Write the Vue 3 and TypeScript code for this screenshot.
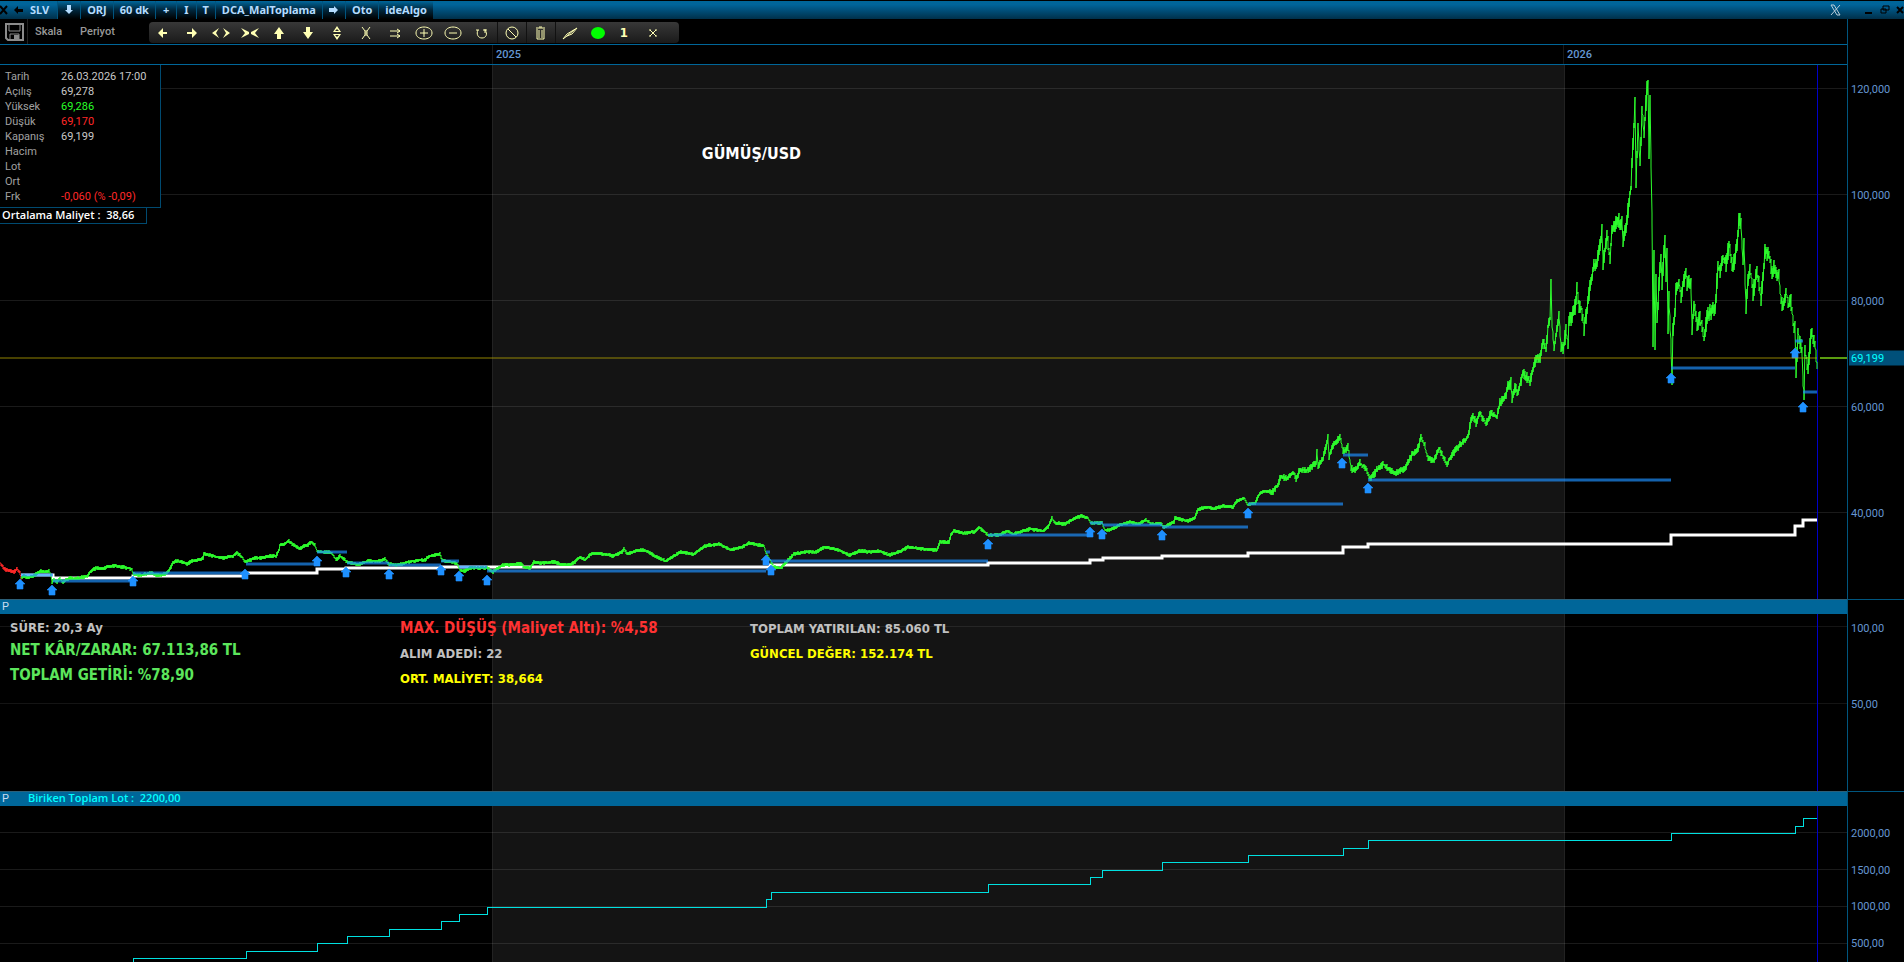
<script setup lang="ts">
type Point = [number, number]

const WIDTH = 1847
const MAIN_TOP = 65
const MAIN_H = 534
const MID_TOP = 599
const MID_H = 192
const LOT_TOP = 791
const LOT_H = 171

const anchors: Point[] = [
  [21, 578], [24, 576], [28, 578], [31, 577], [35, 575], [38, 573], [41, 571], [45, 572], [49, 571], [51, 575],
  [52, 582], [54, 580], [57, 582], [60, 579], [63, 582], [66, 580], [70, 578], [76, 579], [82, 577], [87, 576],
  [91, 571], [96, 568], [102, 569], [107, 567], [113, 566], [117, 566], [122, 567], [127, 568], [132, 569],
  [133, 574], [138, 575], [142, 575], [147, 574], [151, 573], [156, 575], [162, 575], [167, 573], [170, 569],
  [173, 563], [176, 561], [182, 562], [187, 564], [192, 561], [200, 560], [203, 558], [204, 554], [210, 555],
  [216, 557], [222, 558], [228, 557], [233, 556], [237, 553], [242, 557], [245, 562], [250, 560], [255, 558],
  [260, 558], [266, 557], [270, 556], [276, 556], [279, 550], [280, 545], [284, 544], [289, 541], [292, 544],
  [295, 546], [300, 549], [304, 546], [308, 545], [311, 542], [315, 545], [317, 551], [322, 552], [327, 552],
  [332, 553], [336, 560], [340, 556], [344, 559], [347, 562], [352, 563], [358, 565], [363, 563], [368, 561],
  [374, 561], [380, 561], [385, 559], [389, 564], [396, 565], [402, 564], [408, 562], [413, 561], [420, 560],
  [425, 560], [430, 556], [435, 555], [440, 554], [442, 560], [446, 561], [452, 562], [457, 564], [460, 570],
  [465, 571], [470, 568], [475, 568], [480, 568], [487, 568], [493, 572], [497, 569], [503, 565], [521, 564],
  [524, 567], [530, 568], [534, 562], [542, 563], [555, 562], [560, 564], [567, 565], [574, 563], [580, 557],
  [585, 560], [592, 553], [603, 554], [613, 556], [622, 552], [624, 549], [627, 554], [635, 551], [644, 550],
  [655, 556], [666, 561], [680, 552], [694, 554], [705, 546], [719, 544], [731, 550], [742, 547], [749, 543],
  [764, 546], [766, 553], [770, 560], [774, 567], [781, 568], [787, 561], [794, 554], [805, 552], [817, 552],
  [824, 547], [839, 550], [849, 555], [860, 551], [871, 552], [880, 551], [889, 555], [899, 552], [908, 547],
  [924, 549], [937, 550], [940, 542], [949, 542], [951, 535], [954, 531], [964, 533], [975, 532], [979, 527],
  [988, 535], [1000, 535], [1007, 531], [1013, 534], [1030, 529], [1043, 531], [1048, 527], [1052, 518],
  [1055, 523], [1065, 524], [1075, 518], [1081, 516], [1088, 518], [1091, 523], [1102, 523], [1105, 530],
  [1110, 530], [1120, 525], [1130, 522], [1138, 524], [1146, 520], [1152, 524], [1160, 523], [1164, 527],
  [1174, 522], [1175, 518], [1188, 521], [1195, 518], [1198, 509], [1208, 507], [1213, 509], [1222, 506],
  [1233, 507], [1237, 501], [1244, 498], [1248, 505], [1255, 503], [1260, 493], [1265, 491], [1272, 492],
  [1278, 485], [1280, 477], [1287, 478], [1293, 472], [1296, 479], [1300, 470], [1308, 470], [1316, 463],
  [1317, 452], [1318, 467], [1323, 458], [1328, 438], [1329, 457], [1333, 446], [1340, 437], [1343, 452],
  [1348, 447], [1351, 468], [1355, 471], [1360, 463], [1366, 469], [1370, 480], [1377, 470], [1383, 464],
  [1394, 474], [1405, 468], [1412, 455], [1417, 451], [1421, 438], [1425, 446], [1427, 456], [1434, 461],
  [1439, 448], [1447, 464], [1453, 453], [1462, 443], [1468, 437], [1471, 420], [1473, 415], [1476, 423],
  [1480, 413], [1486, 424], [1491, 413], [1497, 417], [1500, 402], [1504, 400], [1508, 387], [1511, 383],
  [1512, 400], [1515, 387], [1518, 393], [1523, 373], [1530, 382], [1536, 357], [1540, 358], [1543, 342],
  [1546, 350], [1548, 327], [1550, 318], [1551, 282], [1552, 325], [1554, 350], [1559, 313], [1561, 350],
  [1563, 350], [1566, 332], [1568, 343], [1569, 322], [1575, 307], [1577, 290], [1579, 308], [1581, 307],
  [1584, 328], [1588, 303], [1591, 280], [1593, 270], [1597, 262], [1600, 242], [1602, 232], [1603, 264],
  [1607, 235], [1610, 260], [1612, 228], [1618, 221], [1622, 222], [1623, 243], [1627, 220], [1629, 200],
  [1631, 188], [1633, 145], [1635, 103], [1636, 181], [1638, 126], [1640, 164], [1642, 113], [1644, 134],
  [1647, 88], [1648, 80], [1649, 157], [1650, 97], [1652, 220], [1653, 338], [1654, 258], [1655, 343],
  [1656, 277], [1657, 322], [1659, 285], [1661, 257], [1662, 282], [1665, 240], [1666, 278], [1667, 249],
  [1668, 331], [1669, 298], [1671, 345], [1672, 381], [1673, 327], [1675, 311], [1676, 290], [1679, 282],
  [1681, 296], [1686, 272], [1687, 284], [1691, 284], [1692, 328], [1694, 306], [1697, 324], [1700, 318],
  [1704, 337], [1708, 313], [1715, 310], [1718, 267], [1720, 271], [1723, 258], [1726, 263], [1729, 246],
  [1733, 267], [1737, 247], [1739, 218], [1741, 223], [1743, 261], [1744, 244], [1746, 308], [1748, 280],
  [1750, 269], [1753, 292], [1757, 273], [1761, 297], [1763, 277], [1765, 252], [1769, 253], [1772, 272],
  [1775, 267], [1779, 278], [1781, 298], [1783, 309], [1786, 292], [1789, 305], [1791, 302], [1793, 323],
  [1795, 326], [1796, 374], [1798, 333], [1802, 353], [1803, 378], [1804, 398], [1805, 352], [1808, 370],
  [1811, 333], [1815, 345], [1817, 366],
]

const openingAnchors: Point[] = [
  [0, 563], [3, 567], [6, 570], [10, 571], [14, 572], [17, 569], [20, 573], [21, 578],
]

/** Expands the closing prices to bar ranges, one bar for each pixel column. */
function barPath(points: Point[]): string {
  let seed = 7
  const random = (): number => {
    seed = (seed * 16807) % 2147483647
    return seed / 2147483647
  }
  let d = `M${points[0][0]} ${points[0][1]}`
  for (let i = 1; i < points.length; i++) {
    const [x0, y0] = points[i - 1]
    const [x1, y1] = points[i]
    for (let x = x0 + 1; x <= x1; x++) {
      const y = y0 + ((y1 - y0) * (x - x0)) / (x1 - x0)
      const range = x < 1270 ? 1 : x < 1500 ? 3 : x < 1560 ? 5 : 8
      const high = Math.max(80, Math.round(y - range * random() - 1))
      const low = Math.round(y + range * random() + 1)
      d += `L${x} ${high}L${x} ${low}`
    }
  }
  return d
}

const pricePath = barPath(anchors)
const openingPath = barPath(openingAnchors)

const supports: [number, number, number][] = [
  [21, 53, 575], [53, 133, 581], [133, 246, 573], [246, 317, 564], [317, 347, 552], [347, 389, 563],
  [389, 441, 565], [441, 459, 561], [459, 487, 567], [487, 766, 571], [766, 770, 552], [771, 988, 561],
  [988, 1090, 535], [1090, 1103, 523], [1103, 1162, 525], [1162, 1248, 527], [1248, 1343, 504],
  [1343, 1368, 455], [1368, 1671, 480], [1671, 1795, 368], [1795, 1803, 341], [1803, 1817, 392],
]

const averageSteps: Point[] = [
  [21, 575], [53, 578], [133, 576], [246, 573], [317, 569], [346, 568], [441, 567], [770, 565], [988, 563],
  [1090, 560], [1103, 558], [1162, 556], [1248, 553], [1343, 547], [1368, 544], [1671, 535], [1795, 526],
  [1803, 520],
]

const buys: Point[] = [
  [20, 579], [52, 585], [133, 576], [245, 569], [317, 556], [346, 567], [389, 569], [441, 565], [459, 571],
  [487, 575], [766, 555], [771, 565], [988, 539], [1090, 527], [1102, 529], [1162, 530], [1248, 508],
  [1342, 458], [1368, 483], [1671, 373], [1795, 348], [1803, 402],
]

const lotXs = [
  133, 246, 317, 347, 389, 441, 459, 487, 766, 771, 988, 1090, 1102, 1162, 1248, 1343, 1368, 1671, 1795, 1803,
]
const lotSteps: Point[] = [
  [53, 965],
  ...lotXs.map((x, i): Point => [x, Math.round(980.3 - (i + 3) * 7.37)]),
]

function stepPath(steps: Point[]): string {
  return `M${steps[0][0]} ${steps[0][1]}` + steps.slice(1).map(([x, y]) => `H${x}V${y}`).join('') + 'H1817'
}

const averagePath = stepPath(averageSteps)
const lotPath = stepPath(lotSteps)

interface Tick { label: string; y: number }
const mainTicks: Tick[] = [
  { label: '120,000', y: 88 }, { label: '100,000', y: 194 }, { label: '80,000', y: 300 },
  { label: '60,000', y: 406 }, { label: '40,000', y: 512 },
]
const midTicks: Tick[] = [{ label: '100,00', y: 626 }, { label: '50,00', y: 703 }]
const lotTicks: Tick[] = [
  { label: '2000,00', y: 832 }, { label: '1500,00', y: 869 }, { label: '1000,00', y: 906 }, { label: '500,00', y: 943 },
]

const percent = (value: number, size: number): string => `${(value / size) * 100}%`

const quote = [
  { label: 'Tarih', value: '26.03.2026 17:00', tone: '' },
  { label: 'Açılış', value: '69,278', tone: '' },
  { label: 'Yüksek', value: '69,286', tone: 'up' },
  { label: 'Düşük', value: '69,170', tone: 'down' },
  { label: 'Kapanış', value: '69,199', tone: '' },
  { label: 'Hacim', value: '', tone: '' },
  { label: 'Lot', value: '', tone: '' },
  { label: 'Ort', value: '', tone: '' },
  { label: 'Frk', value: '-0,060 (% -0,09)', tone: 'down' },
]

const years = [{ label: '2025', x: 492 }, { label: '2026', x: 1563 }]

interface Tool { name: string; d?: string; fill?: boolean; sep?: boolean; text?: string; dot?: boolean; size?: string }
const tools: Tool[] = [
  { name: 'Sola', d: 'M6 11L11 6V10H15V12H11V16Z', fill: true },
  { name: 'Sağa', d: 'M16 11L11 6V10H6V12H11V16Z', fill: true },
  { name: 'Yatay genişlet', d: 'M9 6L2 11L9 16L6 11ZM13 6L20 11L13 16L16 11Z', fill: true },
  { name: 'Yatay daralt', d: 'M2 6L10 10V12L2 16L6 11ZM20 6L12 10V12L20 16L16 11Z', fill: true },
  { name: 'Yukarı', d: 'M11 5L16 12H13V17H9V12H6Z', fill: true },
  { name: 'Aşağı', d: 'M11 17L16 10H13V5H9V10H6Z', fill: true },
  { name: 'Dikey genişlet', d: 'M11 4L15 10H7ZM11 18L15 12H7ZM11 7L9 9H13ZM11 15L9 13H13Z', fill: true },
  { name: 'Dikey daralt', d: 'M7 5L10 9V13L7 17M15 5L12 9V13L15 17M11 8V14' },
  { name: 'Kaydır', d: 'M6 9H16M6 14H16M13 7L16 9L13 11M13 12L16 14L13 16' },
  { name: 'Yakınlaş', d: 'M11 5C15 5 19 7 19 11S15 17 11 17S3 15 3 11S7 5 11 5ZM7 11H15M11 7V15' },
  { name: 'Uzaklaş', d: 'M11 5C15 5 19 7 19 11S15 17 11 17S3 15 3 11S7 5 11 5ZM7 11H15' },
  { name: 'Yenile', d: 'M7 8C5 12 7 16 11 16S17 12 14 8M12 8H16M14 7V11M5 8H8' },
  { name: 'Engelle', d: 'M11 5A6 6 0 1 1 11 17A6 6 0 1 1 11 5ZM7 7L15 15', sep: true },
  { name: 'Sil', d: 'M7 7V17H14V7M6 6H15M9 5H12M9 8V16M12 8V16', sep: true },
  { name: 'Çizim', d: 'M4 17L8 12L18 6L13 12L8 14ZM8 14L15 8', sep: true },
  { name: 'Renk', dot: true },
  { name: 'Kalınlık', text: '1', size: 'narrow' },
  { name: 'Kapat', d: 'M8 8L14 14M14 8L8 14M7 8H9M13 8H15M7 14H9M13 14H15', size: 'wide' },
]
</script>

<template>
  <div class="app">
    <header class="titlebar">
      <button class="plain" aria-label="Kapat"><svg width="8" height="10"><path d="M0 1L7 9M7 1L0 9" stroke="#000" stroke-width="2" /></svg></button>
      <button class="plain back" aria-label="Geri"><svg width="10" height="8"><path d="M0 4L4 0V3H9V6H4V8Z" /></svg></button>
      <button class="tab symbol">SLV</button>
      <button class="tab" aria-label="Aşağı"><svg width="10" height="10"><path d="M3 0H7V5H9L5 9L1 5H3Z" /></svg></button>
      <button class="tab">ORJ</button>
      <button class="tab">60 dk</button>
      <button class="tab glyph">+</button>
      <button class="tab glyph">I</button>
      <button class="tab">T</button>
      <button class="tab">DCA_MalToplama</button>
      <button class="tab" aria-label="İleri"><svg width="10" height="10"><path d="M0 3H5V1L9 5L5 9V7H0Z" /></svg></button>
      <button class="tab">Oto</button>
      <button class="tab">ideAlgo</button>
      <span class="spacer"></span>
      <button class="plain share" aria-label="X"><svg width="12" height="12"><path d="M1 1H4L10 11H7ZM10 1L1 11" fill="none" stroke="#b8ccd8" /></svg></button>
      <button class="plain" aria-label="Küçült"><svg width="10" height="10"><path d="M1 8H8" stroke="#000" stroke-width="2" /></svg></button>
      <button class="plain" aria-label="Geri yükle"><svg width="10" height="10"><path d="M3 1H9V5H3ZM1 4H6V8H1Z" fill="none" stroke="#000" /></svg></button>
      <button class="plain" aria-label="Pencereyi kapat"><svg width="8" height="10"><path d="M1 2L7 8M7 2L1 8" stroke="#000" stroke-width="2" /></svg></button>
    </header>

    <div class="menubar">
      <button class="save" aria-label="Kaydet">
        <svg width="20" height="18"><path d="M1 1H18V17H3L1 15Z" fill="none" stroke="#8c8c8c" stroke-width="2" /><path d="M4 1V8H15V1M5 17V11H14V17" fill="none" stroke="#8c8c8c" /><rect x="9" y="12" width="5" height="5" fill="#8c8c8c" /></svg>
      </button>
      <button class="menu">Skala</button>
      <button class="menu">Periyot</button>
      <div class="tools">
        <button v-for="tool in tools" :key="tool.name" class="tool" :class="[tool.size, { sep: tool.sep }]" :aria-label="tool.name">
          <template v-if="tool.text">{{ tool.text }}</template>
          <svg v-else width="22" height="22">
            <ellipse v-if="tool.dot" cx="11" cy="11" rx="7" ry="6" fill="#00ff00" />
            <path v-else :d="tool.d" fill-rule="evenodd" :fill="tool.fill ? '#ffffb4' : 'none'" :stroke="tool.fill ? 'none' : '#ffffb4'" stroke-width="1" />
          </svg>
        </button>
      </div>
    </div>
    <div class="corner"></div>

    <div class="timebar">
      <span v-for="year in years" :key="year.label" class="year" :style="{ left: percent(year.x, WIDTH) }">{{ year.label }}</span>
    </div>
    <div class="corner"></div>

    <main class="panel">
      <svg class="plot" :viewBox="`0 ${MAIN_TOP} ${WIDTH} ${MAIN_H}`" preserveAspectRatio="none">
        <rect x="492" y="65" width="1072" height="534" fill="#141414" />
        <path d="M492.5 65V599M1564.5 65V599" stroke="#222" />
        <path v-for="tick in mainTicks" :key="tick.label" :d="`M0 ${tick.y + 0.5}H1847`" stroke="#fff" stroke-opacity="0.1" />
        <path d="M1817.5 65V599" stroke="#0000c8" />
        <path :d="averagePath" fill="none" stroke="#fff" stroke-width="3" />
        <path :d="openingPath" fill="none" stroke="#ff2828" />
        <path :d="pricePath" fill="none" stroke="#2dff2d" stroke-linejoin="bevel" />
        <path v-for="[x1, x2, y] in supports" :key="x1" :d="`M${x1} ${y}H${x2}`" stroke="#1e90ff" stroke-opacity="0.68" stroke-width="3" />
        <path v-for="[x, y] in buys" :key="x" :d="`M${x} ${y}L${x + 5} ${y + 5}H${x + 3}V${y + 10}H${x - 3}V${y + 5}H${x - 5}Z`" fill="#1e90ff" stroke="#1e90ff" stroke-opacity="0.6" />
        <path d="M0 358H1817" stroke="#c8b400" stroke-opacity="0.36" stroke-width="2" />
        <path d="M1820 358H1847" stroke="#5a9c10" stroke-width="2" />
      </svg>
      <section class="info">
        <dl class="quote">
          <div v-for="row in quote" :key="row.label">
            <dt>{{ row.label }}</dt>
            <dd :class="row.tone">{{ row.value }}</dd>
          </div>
        </dl>
        <p class="average">Ortalama Maliyet :&nbsp; 38,66</p>
      </section>
      <h1 class="pair">GÜMÜŞ/USD</h1>
    </main>
    <div class="axis">
      <span v-for="tick in mainTicks" :key="tick.label" class="tick" :style="{ top: percent(tick.y + 1 - MAIN_TOP, MAIN_H) }">{{ tick.label }}</span>
      <span class="tick last" :style="{ top: percent(358 - MAIN_TOP, MAIN_H) }">69,199</span>
    </div>

    <section class="panel">
      <svg class="plot" :viewBox="`0 ${MID_TOP} ${WIDTH} ${MID_H}`" preserveAspectRatio="none">
        <rect x="492" y="599" width="1072" height="192" fill="#141414" />
        <path d="M492.5 599V791M1564.5 599V791" stroke="#222" />
        <path v-for="tick in midTicks" :key="tick.label" :d="`M0 ${tick.y + 0.5}H1847`" stroke="#fff" stroke-opacity="0.08" />
        <path d="M1817.5 599V791" stroke="#0000c8" />
      </svg>
      <div class="content">
        <h2 class="strip"><span>P</span></h2>
        <div class="stats">
          <div class="col first">
            <p>SÜRE: 20,3 Ay</p>
            <p class="big gain">NET KÂR/ZARAR: 67.113,86 TL</p>
            <p class="big gain">TOPLAM GETİRİ: %78,90</p>
          </div>
          <div class="col">
            <p class="big loss">MAX. DÜŞÜŞ (Maliyet Altı): %4,58</p>
            <p>ALIM ADEDİ: 22</p>
            <p class="gold">ORT. MALİYET: 38,664</p>
          </div>
          <div class="col">
            <p>TOPLAM YATIRILAN: 85.060 TL</p>
            <p class="gold">GÜNCEL DEĞER: 152.174 TL</p>
          </div>
        </div>
      </div>
    </section>
    <div class="axis ruled">
      <span v-for="tick in midTicks" :key="tick.label" class="tick" :style="{ top: percent(tick.y + 1 - MID_TOP, MID_H) }">{{ tick.label }}</span>
    </div>

    <section class="panel">
      <svg class="plot" :viewBox="`0 ${LOT_TOP} ${WIDTH} ${LOT_H}`" preserveAspectRatio="none">
        <rect x="492" y="791" width="1072" height="171" fill="#141414" />
        <path d="M492.5 791V962M1564.5 791V962" stroke="#222" />
        <path v-for="tick in lotTicks" :key="tick.label" :d="`M0 ${tick.y + 0.5}H1847`" stroke="#fff" stroke-opacity="0.1" />
        <path d="M1817.5 791V962" stroke="#0000c8" />
        <path :d="lotPath" fill="none" stroke="#00e0e0" shape-rendering="crispEdges" />
      </svg>
      <div class="content">
        <h2 class="strip"><span>P</span><b>Biriken Toplam Lot :&nbsp; 2200,00</b></h2>
      </div>
    </section>
    <div class="axis ruled">
      <span v-for="tick in lotTicks" :key="tick.label" class="tick" :style="{ top: percent(tick.y - LOT_TOP, LOT_H) }">{{ tick.label }}</span>
    </div>
  </div>
</template>

<style>
body {
  margin: 0;
  background: #000;
}
</style>

<style scoped>
.app {
  display: grid;
  grid-template-columns: minmax(0, 1fr) 57px;
  grid-template-rows: 19px 26px 20px minmax(0, 534fr) minmax(0, 192fr) minmax(0, 171fr);
  height: 100vh;
  overflow: hidden;
  background: #000;
  color: #c8c8c8;
  font: 11px/15px Roboto, "Liberation Sans", sans-serif;
}
button {
  border: 0;
  padding: 0;
  background: none;
  color: inherit;
  font: inherit;
}
svg {
  display: block;
}
h1,
h2,
p,
dl,
dd {
  margin: 0;
}
.titlebar {
  grid-column: 1 / -1;
  display: flex;
  box-sizing: border-box;
  border-top: 1px solid #000;
  background: linear-gradient(#006699, #00649a 20%, #00304a);
}
.plain {
  display: flex;
  align-items: center;
}
.back {
  margin-left: 6px;
}
.tab {
  display: flex;
  align-items: center;
  justify-content: center;
  padding: 0 6px;
  border-left: 1px solid #005580;
  background: linear-gradient(#00669a, #00263c 50%, #000);
  color: #b4dcff;
  font: bold 11px/18px "Noto Sans", sans-serif;
}
.tab svg {
  fill: #b4dcff;
}
.symbol {
  padding: 0 8px 0 6px;
  border-left: 0;
  background: none;
}
.glyph {
  padding: 0 7px;
}
.spacer {
  flex: 1;
}
.share {
  margin-right: 16px;
}
.plain + .plain {
  margin-left: 6px;
}
.menubar {
  display: flex;
  border-bottom: 1px solid #006699;
  color: #999;
}
.save {
  display: flex;
  align-items: center;
  width: 28px;
  padding-left: 5px;
  box-sizing: border-box;
  border-right: 1px solid #222;
}
.menu {
  margin-left: 7px;
  font-weight: 500;
  line-height: 22px;
}
.menu + .menu {
  margin-left: 18px;
}
.tools {
  display: flex;
  margin: 3px 0 1px 34px;
  padding-right: 8px;
  border-radius: 4px;
  background: linear-gradient(#383838, #1a1a1a);
}
.tool {
  display: flex;
  align-items: center;
  justify-content: center;
  box-sizing: border-box;
  width: 29px;
  color: #ffffb4;
  font: bold 13px/20px "DejaVu Sans Condensed", sans-serif;
}
.narrow {
  width: 22px;
}
.wide {
  width: 36px;
}
.sep {
  border-left: 1px solid #111;
}
.timebar {
  position: relative;
  box-sizing: border-box;
  border-bottom: 1px solid #006699;
}
.corner,
.axis {
  box-sizing: border-box;
  border-left: 1px solid #00567f;
}
.year {
  position: absolute;
  top: 0;
  padding-left: 3px;
  border-left: 1px solid #181818;
  color: #6496d2;
  font-weight: 500;
  line-height: 19px;
}
.panel {
  display: grid;
  grid-template: minmax(0, 1fr) / minmax(0, 1fr);
}
.panel > * {
  grid-area: 1 / 1;
}
.plot {
  width: 100%;
  height: 100%;
}
.info {
  align-self: start;
  justify-self: start;
}
.quote {
  width: 160px;
  padding: 4px 0 3px;
  border: solid #004a70;
  border-width: 0 1px 1px 0;
  background: #000;
}
.quote div {
  display: flex;
  height: 15px;
}
.quote dt {
  width: 56px;
  padding-left: 5px;
  color: #a0a0a0;
}
.quote .up {
  color: #28ff28;
}
.quote .down {
  color: #ff2828;
}
.average {
  box-sizing: border-box;
  width: 147px;
  padding: 0 0 1px 2px;
  border: solid #004a70;
  border-width: 0 1px 1px 0;
  background: #000;
  color: #fff;
  font: 600 11px/14px "Open Sans", sans-serif;
}
.pair {
  justify-self: start;
  margin-left: 38%;
  padding-top: 79px;
  color: #fff;
  font: bold 16px/20px "DejaVu Sans Condensed", sans-serif;
}
.axis {
  position: relative;
  color: #6496d2;
}
.ruled {
  border-top: 1px solid #00567f;
}
.tick {
  position: absolute;
  left: 0;
  right: 0;
  padding-left: 3px;
  transform: translateY(-50%);
}
.last {
  margin-left: 1px;
  padding-left: 2px;
  background: #00507a;
  color: #00ffff;
}
.strip {
  display: flex;
  box-sizing: border-box;
  height: 15px;
  padding-left: 2px;
  border-top: 1px solid #2c5f78;
  background: #006699;
  color: #c8dcf0;
  font: 11px/14px Roboto, sans-serif;
}
.strip span {
  width: 26px;
}
.strip b {
  color: #00ffff;
  font: 600 11px/12px "Open Sans", sans-serif;
}
.stats {
  display: grid;
  grid-template-columns: 390fr 350fr 1097fr;
  padding: 2px 0 0 10px;
  color: #c0c0c0;
  font: bold 13px/25px "DejaVu Sans Condensed", sans-serif;
}
.col {
  white-space: nowrap;
}
.first p:first-child {
  padding-top: 2px;
  line-height: 20px;
}
.big {
  font-size: 15px;
}
.gain {
  color: #5ce65c;
}
.loss {
  color: #ff3232;
}
.gold {
  color: #ffff00;
}
</style>
